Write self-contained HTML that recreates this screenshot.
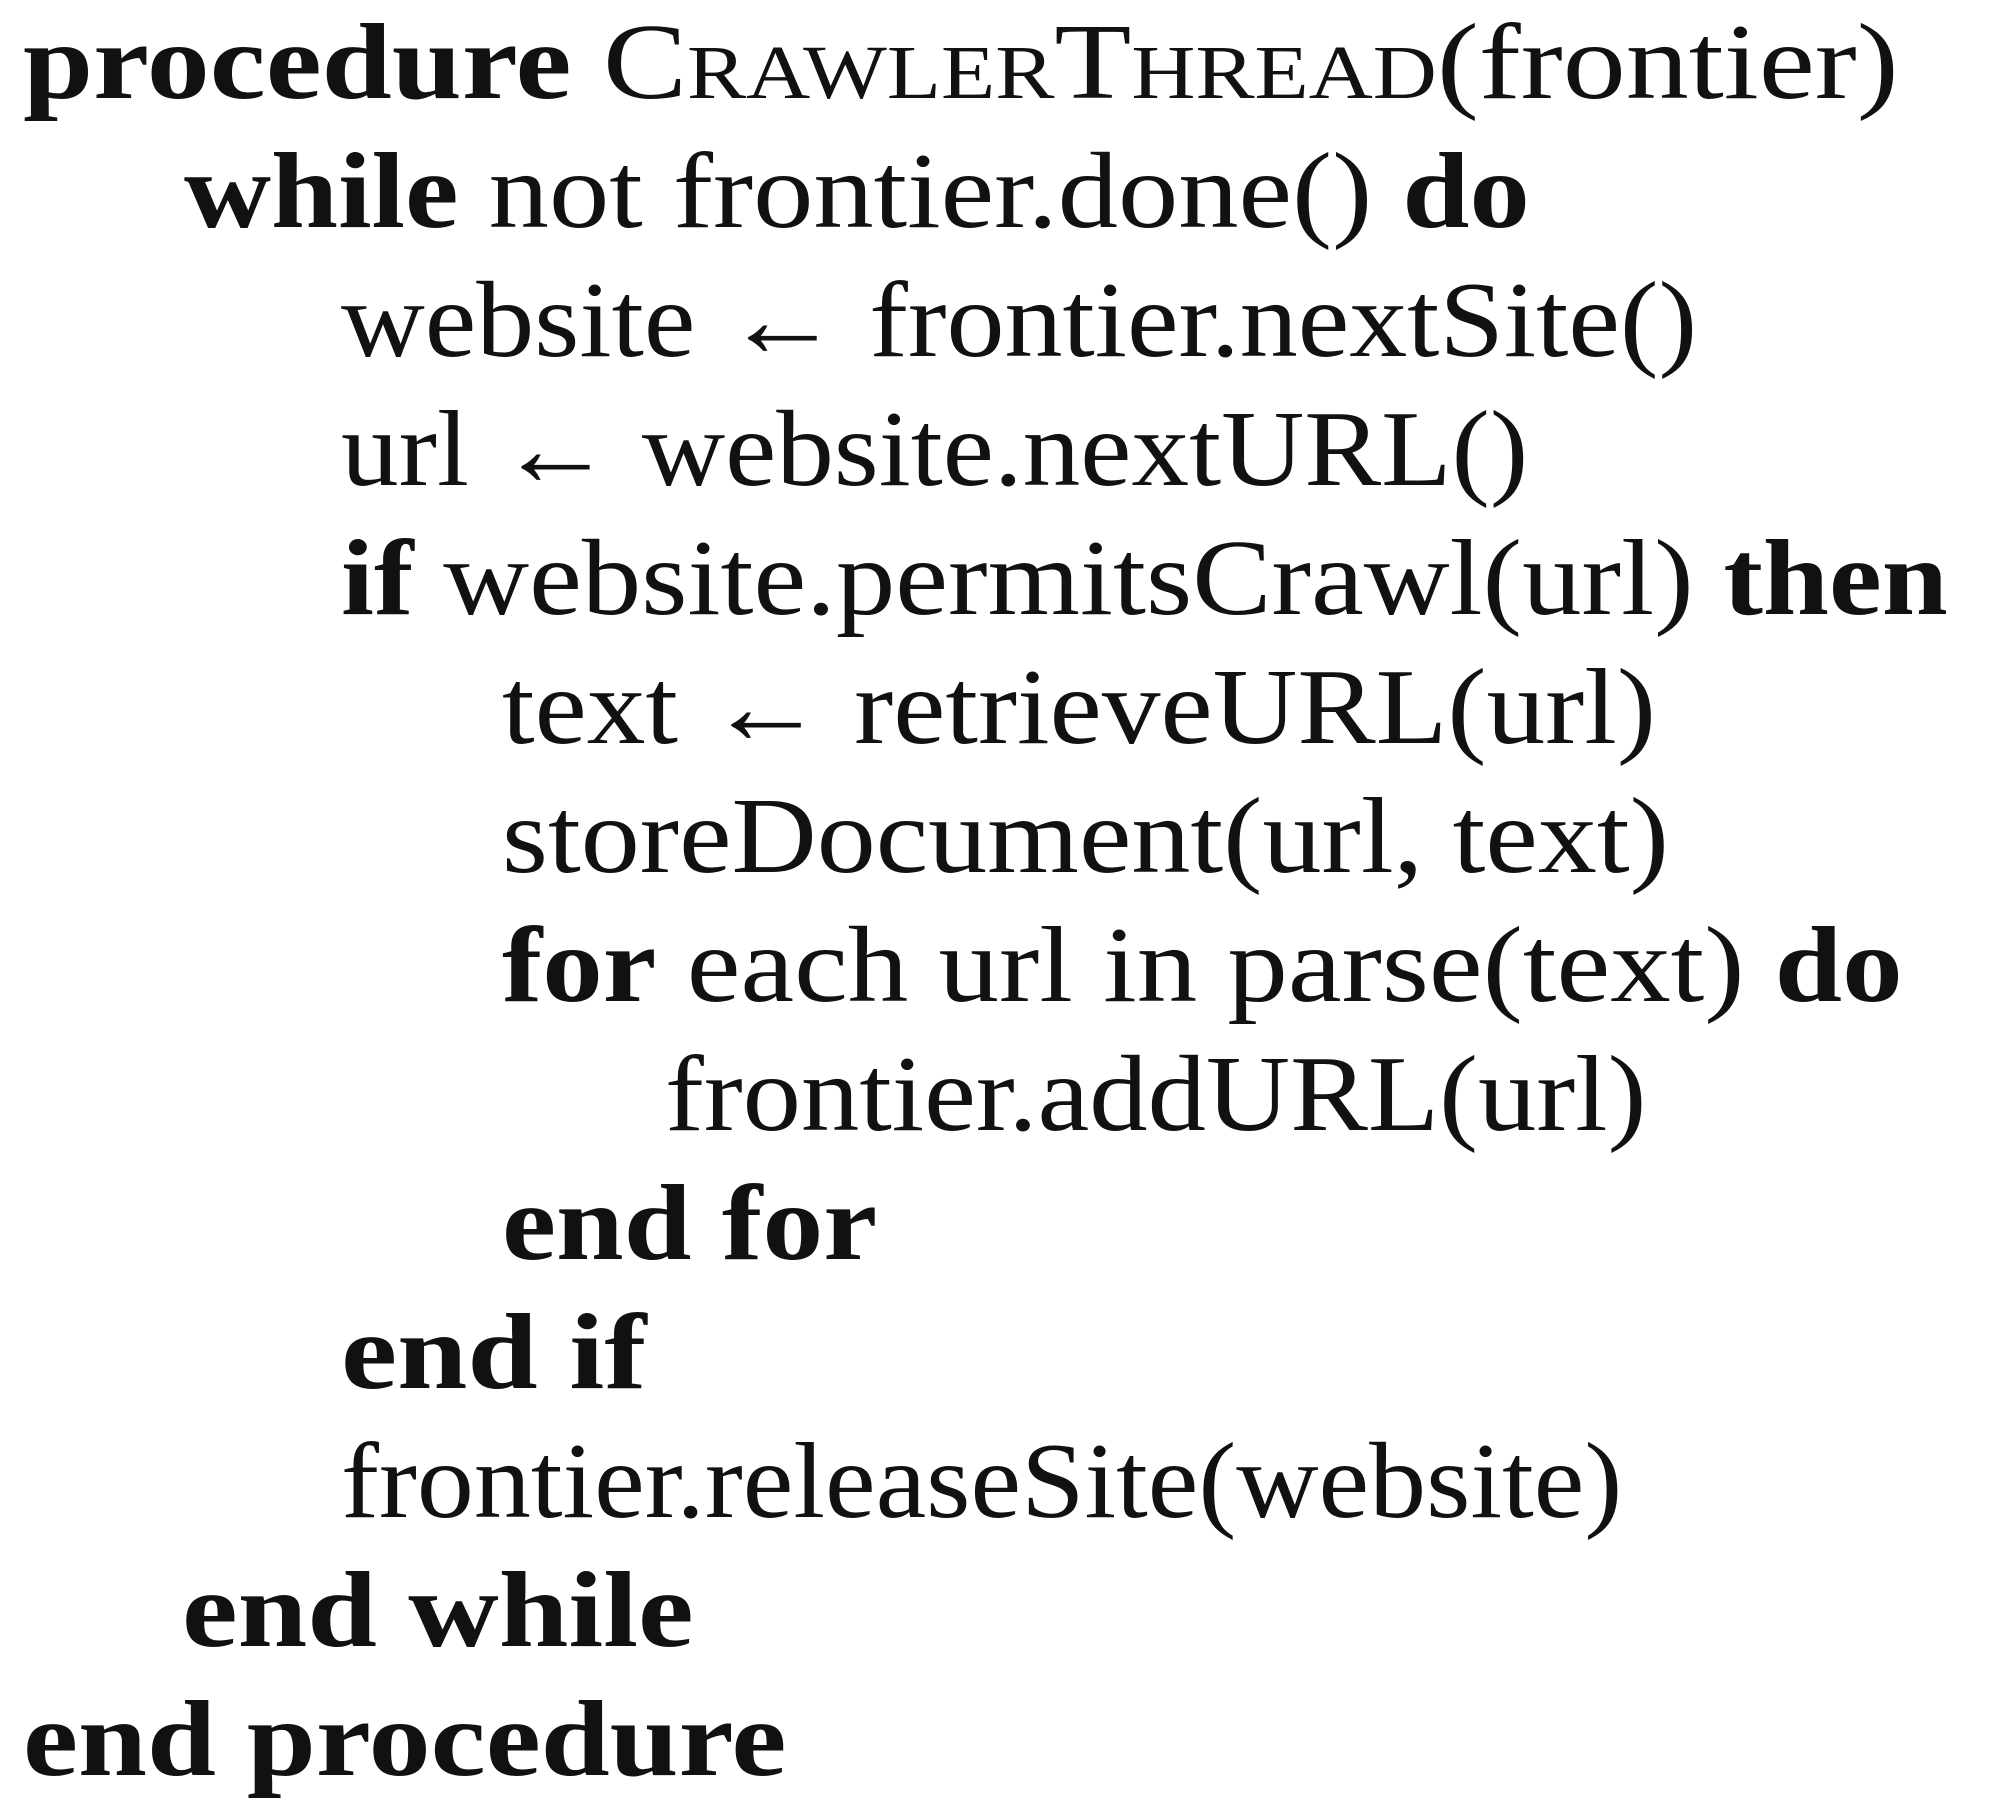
<!DOCTYPE html>
<html><head><meta charset="utf-8"><style>
html,body{margin:0;padding:0;background:#fff;}
body{width:2000px;height:1808px;position:relative;overflow:hidden;font-family:"Liberation Serif",serif;font-size:108px;color:#111;}
.l{position:absolute;white-space:nowrap;line-height:130px;height:130px;transform-origin:0 0;}
b{font-weight:bold;}
.sc{font-variant:small-caps;}
</style></head><body>
<div class="l" style="top:-2px;left:23px;transform:scaleX(1.167)"><b>procedure</b> <span class="sc">CrawlerThread</span>(frontier)</div>
<div class="l" style="top:127px;left:184px;transform:scaleX(1.116)"><b>while</b> not frontier.done() <b>do</b></div>
<div class="l" style="top:256px;left:341px;transform:scaleX(1.074)">website ← frontier.nextSite()</div>
<div class="l" style="top:385px;left:341px;transform:scaleX(1.067)">url ← website.nextURL()</div>
<div class="l" style="top:514px;left:341px;transform:scaleX(1.10)"><b>if</b> website.permitsCrawl(url) <b>then</b></div>
<div class="l" style="top:643px;left:502px;transform:scaleX(1.087)">text ← retrieveURL(url)</div>
<div class="l" style="top:772px;left:502px;transform:scaleX(1.093)">storeDocument(url, text)</div>
<div class="l" style="top:901px;left:502px;transform:scaleX(1.12)"><b>for</b> each url in parse(text) <b>do</b></div>
<div class="l" style="top:1030px;left:665px;transform:scaleX(1.08)">frontier.addURL(url)</div>
<div class="l" style="top:1159px;left:502px;transform:scaleX(1.127)"><b>end for</b></div>
<div class="l" style="top:1288px;left:341px;transform:scaleX(1.17)"><b>end if</b></div>
<div class="l" style="top:1417px;left:341px;transform:scaleX(1.055)">frontier.releaseSite(website)</div>
<div class="l" style="top:1546px;left:182px;transform:scaleX(1.16)"><b>end while</b></div>
<div class="l" style="top:1675px;left:23px;transform:scaleX(1.148)"><b>end procedure</b></div>
</body></html>
